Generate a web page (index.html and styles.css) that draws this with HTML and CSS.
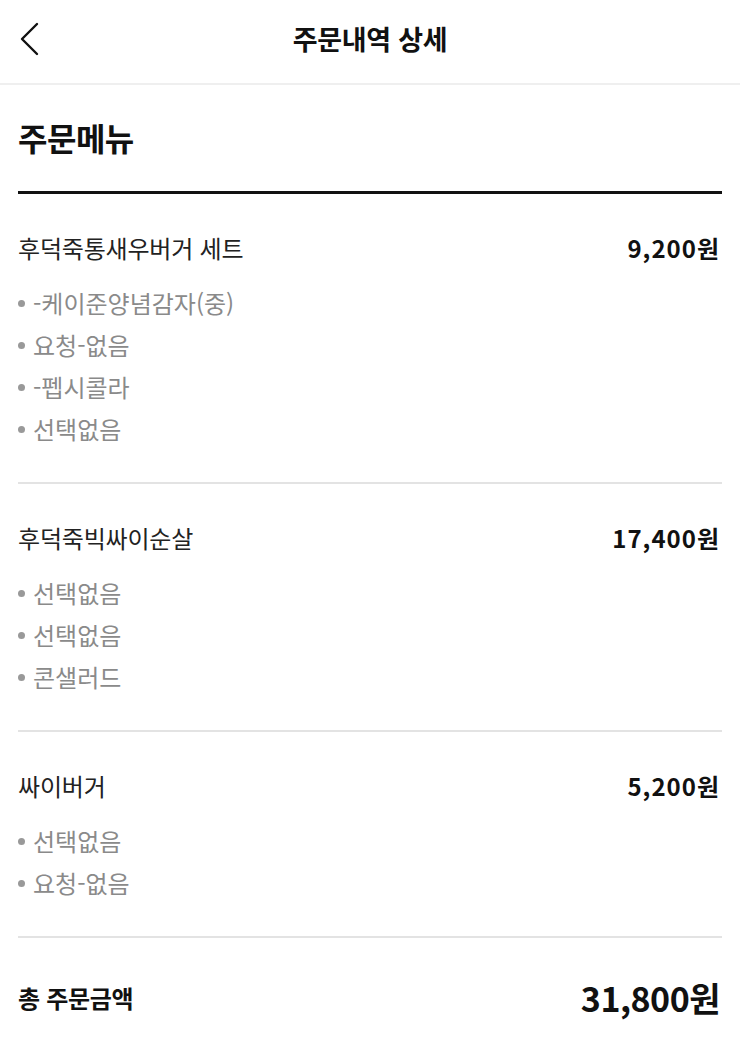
FILE: index.html
```html
<!DOCTYPE html>
<html lang="ko">
<head>
<meta charset="utf-8">
<title>주문내역 상세</title>
<link rel="stylesheet" href="styles.css">
</head>
<body>
<header class="topbar">
  <button class="back" aria-label="뒤로">
    <svg width="22" height="34" viewBox="0 0 22 34" fill="none"><path d="M19 2 L4 17 L19 32" stroke="#111" stroke-width="2.4" stroke-linecap="round" stroke-linejoin="round"/></svg>
  </button>
  <h1 class="title">주문내역 상세</h1>
</header>
<main class="content">
  <h2 class="section-title">주문메뉴</h2>
  <ul class="orders">
    <li class="order">
      <div class="order-head"><span class="name">후덕죽통새우버거 세트</span><span class="price">9,200원</span></div>
      <ul class="options">
        <li>-케이준양념감자(중)</li>
        <li>요청-없음</li>
        <li>-펩시콜라</li>
        <li>선택없음</li>
      </ul>
    </li>
    <li class="order">
      <div class="order-head"><span class="name">후덕죽빅싸이순살</span><span class="price">17,400원</span></div>
      <ul class="options">
        <li>선택없음</li>
        <li>선택없음</li>
        <li>콘샐러드</li>
      </ul>
    </li>
    <li class="order">
      <div class="order-head"><span class="name">싸이버거</span><span class="price">5,200원</span></div>
      <ul class="options">
        <li>선택없음</li>
        <li>요청-없음</li>
      </ul>
    </li>
  </ul>
  <div class="total"><span class="total-label">총 주문금액</span><span class="total-price">31,800원</span></div>
</main>
</body>
</html>
```
FILE: styles.css
```css
* { box-sizing: border-box; margin: 0; padding: 0; }
body {
  font-family: "Noto Sans CJK KR", "Noto Sans", sans-serif;
  color: #111;
  background: #fff;
}
.topbar {
  height: 85px;
  border-bottom: 2px solid #efefef;
  display: flex;
  align-items: center;
  justify-content: center;
  position: relative;
}
.back {
  position: absolute;
  left: 18px;
  top: 22px;
  background: none;
  border: 0;
  display: flex;
}
.title {
  font-size: 27px;
  font-weight: 700;
  letter-spacing: -0.3px;
  line-height: 36px;
  margin-top: -6px;
}
.content { padding: 0 18px; }
.section-title {
  font-size: 32px;
  font-weight: 700;
  letter-spacing: -0.5px;
  line-height: 40px;
  padding: 32px 0 34px;
  border-bottom: 3px solid #111;
}
.orders { list-style: none; }
.order {
  padding: 38px 2px 32px 0;
  border-bottom: 2px solid #e3e3e3;
}
.order-head {
  display: flex;
  justify-content: space-between;
  align-items: center;
  line-height: 32px;
  margin-bottom: 18px;
}
.name { font-size: 24px; color: #222; letter-spacing: -0.2px; }
.price { font-size: 24px; font-weight: 700; letter-spacing: 1px; }
.options { list-style: none; }
.options li {
  font-size: 24px;
  line-height: 42px;
  color: #8a8a8a;
  display: flex;
  align-items: center;
  gap: 8px;
}
.options li::before {
  content: "";
  width: 7px;
  height: 7px;
  border-radius: 50%;
  background: #999;
  flex: none;
}
.total {
  display: flex;
  justify-content: space-between;
  align-items: center;
  line-height: 44px;
  padding: 38px 2px 0 0;
}
.total-label { font-size: 24px; font-weight: 700; letter-spacing: -0.3px; }
.total-price { font-size: 34px; font-weight: 700; letter-spacing: -0.5px; }
```
